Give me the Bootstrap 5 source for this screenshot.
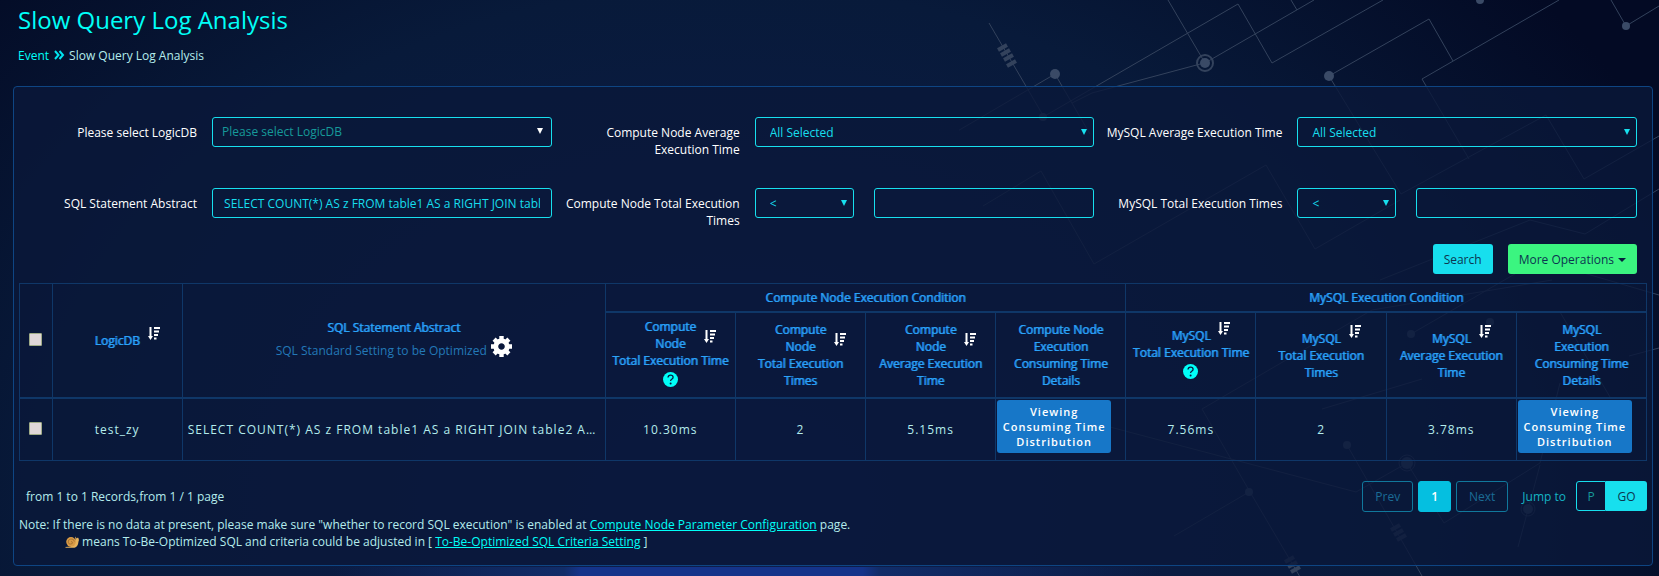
<!DOCTYPE html>
<html lang="en">
<head>
<meta charset="utf-8">
<meta name="viewport" content="width=device-width, initial-scale=1">
<title>Slow Query Log Analysis</title>
<link href="https://cdn.jsdelivr.net/npm/bootstrap@5.3.0/dist/css/bootstrap.min.css" rel="stylesheet">
<style>
:root{--cy:#17dfee;--line:#0f3768}
body{font-family:"Open Sans","Noto Sans",sans-serif;font-size:12px;line-height:17px;color:#b4ecec;min-height:100vh;
  background:
    linear-gradient(90deg,transparent 20%,#112c68 34%,#15338a 35%,#15338a 52%,#112c68 53%,transparent 70%) 0 100%/100% 9px no-repeat,
    radial-gradient(1050px 800px at 44% 88%,#0e1d4e 0%,#081a3a 65%,#030a24 100%)}
a{color:#00fff8}
.circuit{position:absolute;top:0;right:0;width:700px;height:576px;z-index:-1}
.page-head{padding:4px 18px 0}
.page-head h1{font-size:24px;line-height:32px;color:#00fff8}
.crumbs{margin-top:11px}
.crumbs a{text-decoration:none}
.panel{margin:22px 6px 9px 13px;border:1px solid #0e4583;border-radius:4px;background:rgba(10,24,58,.8);padding:30px 5px 15px}
.filters{display:grid;grid-template-columns:repeat(3,1fr);gap:29px 12px;padding:0 10px 0 2px}
.filters>div{gap:15px}
.filters label{color:#fff;text-align:right;flex:1 1 0;padding-top:7px;min-height:42px}
.ctl{flex:0 0 64%}
.form-control,.form-select{height:30px;min-height:30px;padding:6px 11px 5px;font-size:12px;line-height:17px;border:1px solid var(--cy);border-radius:3px;background-color:transparent;color:var(--cy)}
.form-select{padding:6px 24px 5px 14px;background-image:url("data:image/svg+xml,%3Csvg xmlns='http://www.w3.org/2000/svg' viewBox='0 0 6 6'%3E%3Cpath d='M0 0h6L3 6z' fill='%2317dfee'/%3E%3C/svg%3E");background-size:6px 6px;background-position:right 6px top 11px}
.form-select.unset{color:#169a9a;padding:5px 24px 6px 9px;background-image:url("data:image/svg+xml,%3Csvg xmlns='http://www.w3.org/2000/svg' viewBox='0 0 6 6'%3E%3Cpath d='M0 0h6L3 6z' fill='white'/%3E%3C/svg%3E");background-position:right 8px top 10px}
.op{flex:0 0 99px}
.split{gap:20px}
.actions{padding:14px 10px 9px;gap:15px}
.btn{font-size:12px;line-height:17px;border-radius:3px}
.actions .btn{height:30px;padding:6px 11px;border:0;color:#0c3550}
.btn-find{background:var(--cy)}
.btn-more{background:#3bf580}
.btn-more::after{margin-left:4px;border-width:4px 4px 0;vertical-align:2px;color:#06203c}
.logs{table-layout:fixed;width:100%;border-collapse:collapse;text-align:center}
.logs th,.logs td{border:1px solid var(--line);vertical-align:middle;padding:5px}
.logs th{color:#2ca4f8;font-weight:400;text-shadow:1px 0 0 #1c80dc}
.logs .group th{height:28px;border-bottom-width:2px}
.logs thead{border-bottom:2px solid var(--line)}
.logs .sub th{height:85px}
.logs tbody td{height:62px;letter-spacing:1px}
.logs tbody td.sql{white-space:nowrap;overflow:hidden;text-align:left}
.logs td.act{padding:1px;text-align:left;vertical-align:top}
.logs input{appearance:none;width:13px;height:13px;background:#dfd6d8;border:1px solid #9fab86;border-radius:1px;display:block;margin:0 auto 2px}
.sorter{display:inline-flex;align-items:flex-start;vertical-align:top}
.sorter::before{content:"";width:20px}
.sorter svg{width:12px;height:13px;margin:-5px 0 0 8px}
.sorter.two{align-items:center}
.sorter.two svg{margin-top:2px}
.setting{color:#2378b8;text-decoration:none;text-shadow:none;display:inline-flex;align-items:center;gap:4px;margin:6px 0 4px}
.setting svg{margin-top:-8px}
.help{display:block;width:15px;height:15px;margin:3px auto 5px}
.btn-view{width:114px;background:#1777c8;color:#fff;font-weight:600;font-size:11px;line-height:15px;letter-spacing:1px;padding:4px 2px;border:0}
.foot{padding:20px 0 0 7px}
.pager .btn{height:31px;padding:6px 12px;border:1px solid #10789c;color:#1a6c96;background:transparent}
.pager .gap-1{gap:5px!important}
.pager .btn.cur{background:#05bfe0;color:#fff;border-color:#05bfe0;font-weight:600}
.jump{color:#14b4c4}
.jump label{margin:0 10px 0 14px}
.jump .form-control{width:30px;flex:none;text-align:center;padding:4px;border-radius:3px 0 0 3px}
.jump .form-control::placeholder{color:#169a9a}
.jump .btn{height:30px;width:41px;padding:5px 0;border:0;background:var(--cy);color:#0c3550;border-radius:0 3px 3px 0}
.notes{margin-top:4px}
.notes .second{padding-left:46px}
</style>
</head>
<body>
<svg class="circuit" viewBox="959 0 700 576" fill="none" stroke="#33425c" stroke-width="1" aria-hidden="true">
<path d="M989 23l55 94M944 139l111-65 35 60M1043 117l195-113 34 59L1383 0M1072 103l20-10 112-30M1168 0l37 63L1314 0M1291 0l6 10M1329 76l100-57 24 42M1559 0L1422 79l47 80M1329 76l72 118 145-79 38 64 75-43M983 206l58-35 53 93 172-99 49 84 85-49M1611 0l15 26 33-20M1380 280l150-60 55 14 74-45"/>
<path d="M1659 295l-120-35-128 74M1422 379l-100 30M1202 409l170-99 180-30M1202 409l48 83 53 90M1174 536l75-44M1110 427l246 65 51-29 37 60 96-60 20-80M1347 445l75 131M1540 465l-22 82M1659 348l-30 8M1560 312l50 85"/>
<path d="M998 50l9-5M1001 55l9-5M1004 60l9-5M1007 66l9-5M1391 530l9-5M1394 535l9-5M1397 540l9-5M1285 562l9-5M1288 567l9-5M1291 572l9-5" stroke-width="4"/>
<g fill="#3a4a66" stroke="none"><circle cx="1055" cy="74" r="5"/><circle cx="1205" cy="63" r="5"/><circle cx="1329" cy="76" r="5"/><circle cx="1626" cy="26" r="4"/><circle cx="1480" cy="0" r="4"/><circle cx="1043" cy="117" r="4"/><circle cx="1249" cy="492" r="4"/><circle cx="1347" cy="445" r="4"/><circle cx="1407" cy="463" r="6"/><circle cx="1528" cy="509" r="5"/><circle cx="1411" cy="334" r="4"/><circle cx="1490" cy="322" r="4"/></g>
<circle cx="1205" cy="63" r="8" stroke-width="2"/><circle cx="1407" cy="463" r="8"/><circle cx="1528" cy="509" r="7"/>
</svg>
<svg class="d-none"><symbol id="sort" viewBox="0 0 12 13"><path fill="#fff" d="M1.500 0h2v9H5L2.500 13 0 9h1.500zM6 0h6v2H6zM6 3.500h5v2H6zM6 7h4v2H6zM6 10.500h2.500v2H6z"/></symbol>
<symbol id="help" viewBox="0 0 15 15"><circle cx="7.500" cy="7.500" r="7.500" fill="#00fff8"/><path d="M5 5.500q.2-2.300 2.600-2.300t2.500 2q0 1.200-1.400 2-1.100.6-1.100 1.800" fill="none" stroke="#0a1a40" stroke-width="1.300"/><circle cx="7.600" cy="11.500" r="1" fill="#0a1a40"/></symbol></svg>
<header class="page-head">
<h1 class="m-0">Slow Query Log Analysis</h1>
<nav class="crumbs d-flex align-items-center" aria-label="breadcrumb"><a href="#">Event</a><svg class="mx-1" width="12" height="12" viewBox="0 0 12 12" fill="none" stroke="#00e4f0" stroke-width="2" aria-hidden="true"><path d="M2 1l3.500 4L2 9M6.500 1L10 5 6.500 9"/></svg><span>Slow Query Log Analysis</span></nav>
</header>
<main class="panel">
<form class="filters">
<div class="d-flex"><label for="db">Please select LogicDB</label><div class="ctl"><select id="db" class="form-select unset"><option>Please select LogicDB</option></select></div></div>
<div class="d-flex"><label for="cavg">Compute Node Average<br>Execution Time</label><div class="ctl"><select id="cavg" class="form-select"><option>All Selected</option></select></div></div>
<div class="d-flex"><label for="mavg" class="text-nowrap">MySQL Average Execution Time</label><div class="ctl"><select id="mavg" class="form-select"><option>All Selected</option></select></div></div>
<div class="d-flex"><label for="sql">SQL Statement Abstract</label><div class="ctl"><input id="sql" class="form-control" value="SELECT COUNT(*) AS z FROM table1 AS a RIGHT JOIN table2 AS b"></div></div>
<div class="d-flex"><label for="ctot">Compute Node Total Execution Times</label><div class="ctl split d-flex"><select id="ctot" class="form-select op"><option>&lt;</option></select><input class="form-control" aria-label="Compute node times"></div></div>
<div class="d-flex"><label for="mtot">MySQL Total Execution Times</label><div class="ctl split d-flex"><select id="mtot" class="form-select op"><option>&lt;</option></select><input class="form-control" aria-label="MySQL times"></div></div>
</form>
<div class="actions d-flex justify-content-end"><button class="btn btn-find" type="button">Search</button><button class="btn btn-more dropdown-toggle" type="button">More Operations</button></div>
<table class="logs">
<colgroup><col style="width:2%"><col style="width:8%"><col style="width:26%"><col span="8" style="width:8%"></colgroup>
<thead>
<tr class="group"><th rowspan="2"><input type="checkbox" aria-label="Select all"></th><th rowspan="2"><span class="sorter">LogicDB<svg><use href="#sort"/></svg></span></th><th rowspan="2">SQL Statement Abstract<br><a href="#" class="setting">SQL Standard Setting to be Optimized<svg width="21" height="21" viewBox="-10.500 -10.500 21 21" fill="none" stroke="#fff" aria-hidden="true"><circle r="5.700" stroke-width="4.800"/><path d="M0-10.500v4M0 10.500v-4M-10.500 0h4M10.500 0h-4M-7.400-7.400l3 3M7.400 7.400l-3-3M7.400-7.400l-3 3M-7.400 7.400l3-3" stroke-width="4.400"/></svg></a></th><th colspan="4">Compute Node Execution Condition</th><th colspan="4">MySQL Execution Condition</th></tr>
<tr class="sub">
<th><span class="sorter two"><span>Compute<br>Node</span><svg><use href="#sort"/></svg></span><br><span class="text-nowrap">Total Execution Time</span><svg class="help"><use href="#help"/></svg></th>
<th><span class="sorter two"><span>Compute<br>Node</span><svg><use href="#sort"/></svg></span><br>Total Execution<br>Times</th>
<th><span class="sorter two"><span>Compute<br>Node</span><svg><use href="#sort"/></svg></span><br>Average Execution<br>Time</th>
<th>Compute Node<br>Execution<br>Consuming Time<br>Details</th>
<th><span class="sorter">MySQL<svg><use href="#sort"/></svg></span><br><span class="text-nowrap">Total Execution Time</span><svg class="help"><use href="#help"/></svg></th>
<th><span class="sorter">MySQL<svg><use href="#sort"/></svg></span><br>Total Execution<br>Times</th>
<th><span class="sorter">MySQL<svg><use href="#sort"/></svg></span><br>Average Execution<br>Time</th>
<th>MySQL<br>Execution<br>Consuming Time<br>Details</th>
</tr>
</thead>
<tbody><tr><td><input type="checkbox" aria-label="Select row"></td><td>test_zy</td><td class="sql">SELECT COUNT(*) AS z FROM table1 AS a RIGHT JOIN table2 A…</td><td>10.30ms</td><td>2</td><td>5.15ms</td><td class="act"><button class="btn btn-view" type="button">Viewing Consuming Time Distribution</button></td><td>7.56ms</td><td>2</td><td>3.78ms</td><td class="act"><button class="btn btn-view" type="button">Viewing Consuming Time Distribution</button></td></tr></tbody>
</table>
<div class="foot d-flex justify-content-between align-items-center">
<span>from 1 to 1 Records,from 1 / 1 page</span>
<div class="pager d-flex align-items-center"><div class="d-flex gap-1"><button class="btn" type="button">Prev</button><button class="btn cur" type="button">1</button><button class="btn" type="button">Next</button></div>
<div class="jump d-flex align-items-center"><label for="pg">Jump to</label><input id="pg" class="form-control" placeholder="P"><button class="btn" type="button">GO</button></div></div>
</div>
<div class="notes">Note: If there is no data at present, please make sure "whether to record SQL execution" is enabled at <a href="#">Compute Node Parameter Configuration</a> page.
<div class="second"><svg width="14" height="12" viewBox="0 0 14 12" aria-hidden="true"><path d="M0 11q7 0 9-3l1.500-5q-.5-1.500 0-2.500l1 2 1.500-1q1.500 2 .5 4Q13 11 9.500 11.800H1z" fill="#e8b45c"/><circle cx="6" cy="5.800" r="4.800" fill="#d99a45"/><path d="M6 6q1-1 1.500.3T5.800 8.100 3.200 6.100t2.600-3.100 3.600 2.500" fill="none" stroke="#a87432"/></svg> means To-Be-Optimized SQL and criteria could be adjusted in [ <a href="#">To-Be-Optimized SQL Criteria Setting</a> ]</div></div>
</main>
<script src="https://cdn.jsdelivr.net/npm/bootstrap@5.3.0/dist/js/bootstrap.bundle.min.js"></script>
</body>
</html>
